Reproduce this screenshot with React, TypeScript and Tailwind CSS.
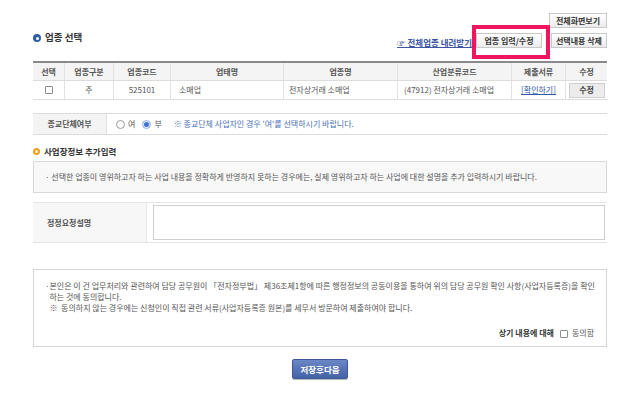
const font = "font-['Noto_Sans_CJK_KR','Noto_Sans',sans-serif]"

function Check() {
  return <span className="inline-block w-[8px] h-[8px] border border-[#8d8d8d] rounded-[1px] bg-white align-middle" />
}

function Radio({ checked }: { checked?: boolean }) {
  return (
    <span
      className={`inline-flex items-center justify-center w-[9px] h-[9px] rounded-full border ${
        checked ? 'border-[#8fb0e6] bg-[#e7effc]' : 'border-[#9a9a9a] bg-white'
      }`}
    >
      {checked && <span className="w-[5px] h-[5px] rounded-full bg-[#3f73d6]" />}
    </span>
  )
}

function GrayButton({ children, className = '' }: { children: React.ReactNode; className?: string }) {
  return (
    <button
      className={`h-[15px] border border-[#c9c9c9] bg-gradient-to-b from-white to-[#ececec] text-[8px] font-bold text-[#333] leading-none whitespace-nowrap ${className}`}
    >
      {children}
    </button>
  )
}

const cols = 'grid grid-cols-[31px_49px_57px_113px_114px_114px_54px_42px]'
const headers = ['선택', '업종구분', '업종코드', '업태명', '업종명', '산업분류코드', '제출서류', '수정']

export default function App() {
  return (
    <div className={`w-[641px] h-[405px] bg-white pt-[13px] pl-[33px] ${font}`}>
      <div className="w-[574px]">
        {/* top right */}
        <div className="flex justify-end h-[15px]">
          <GrayButton className="w-[58px]">전체화면보기</GrayButton>
        </div>

        {/* title row */}
        <div className="relative flex items-start mt-[5px] h-[15px]">
          <div className="flex items-center gap-[4px] h-[10px]">
            <span className="flex items-center justify-center w-[8px] h-[8px] rounded-full bg-[#2f5ea8]">
              <span className="w-[3px] h-[3px] rounded-full bg-white" />
            </span>
            <span className="text-[9.5px] font-bold text-[#333] leading-none">업종 선택</span>
          </div>
          <div className="ml-auto flex items-center h-[15px]">
            <span className="mt-[4px] text-[8.5px] font-bold text-[#3b55a3] underline leading-none whitespace-nowrap">
              ☞ 전체업종 내려받기
            </span>
            <GrayButton className="ml-[4px] w-[66px]">업종 입력/수정</GrayButton>
            <GrayButton className="ml-[9px] w-[56px]">선택내용 삭제</GrayButton>
          </div>
          {/* highlight box */}
          <div className="absolute left-[439px] top-[-8px] w-[78px] h-[34px] border-[4px] border-[#f0155f]" />
        </div>

        {/* table */}
        <div className="mt-[13px] border-t-2 border-[#8a8a8a] text-[8px]">
          <div className={`${cols} h-[18px] bg-[#f4f4f4] border-b border-[#dcdcdc]`}>
            {headers.map((h, i) => (
              <div
                key={h}
                className={`flex items-center justify-center font-bold text-[#555] ${i > 0 ? 'border-l border-[#e2e2e2]' : ''}`}
              >
                {h}
              </div>
            ))}
          </div>
          <div className={`${cols} h-[19px] border-b border-[#dcdcdc] text-[#555]`}>
            <div className="flex items-center justify-center"><Check /></div>
            <div className="flex items-center justify-center border-l border-[#e2e2e2]">주</div>
            <div className="flex items-center justify-center border-l border-[#e2e2e2]">525101</div>
            <div className="flex items-center pl-[8px] border-l border-[#e2e2e2]">소매업</div>
            <div className="flex items-center pl-[5px] border-l border-[#e2e2e2]">전자상거래 소매업</div>
            <div className="flex items-center pl-[6px] border-l border-[#e2e2e2] whitespace-nowrap">(47912) 전자상거래 소매업</div>
            <div className="flex items-center justify-center border-l border-[#e2e2e2] text-[#3355aa] underline">[확인하기]</div>
            <div className="flex items-center justify-center border-l border-[#e2e2e2]">
              <button className="w-[36px] h-[15px] border border-[#d0d0d0] bg-[#ececec] text-[8px] font-bold text-[#444]">수정</button>
            </div>
          </div>
        </div>

        {/* religious group */}
        <div className="mt-[13px] flex h-[22px] border-y border-[#dcdcdc] text-[8px]">
          <div className="w-[74px] flex items-center justify-center bg-[#f4f4f4] border-r border-[#e2e2e2] font-bold text-[#555]">
            종교단체여부
          </div>
          <div className="flex items-center pl-[9px] text-[#555]">
            <Radio />
            <span className="ml-[3px]">여</span>
            <span className="ml-[7px]"><Radio checked /></span>
            <span className="ml-[3px]">부</span>
            <span className="ml-[12px] text-[#4a6fb8]">※ 종교단체 사업자인 경우 '여'를 선택하시기 바랍니다.</span>
          </div>
        </div>

        {/* additional info */}
        <div className="mt-[11px] flex items-center gap-[4px] h-[10px]">
          <span className="flex items-center justify-center w-[7px] h-[7px] rounded-full bg-[#f0a020]">
            <span className="w-[3px] h-[3px] rounded-full bg-[#fff2d0]" />
          </span>
          <span className="text-[8.5px] font-bold text-[#333] leading-none">사업장정보 추가입력</span>
        </div>
        <div className="mt-[5px] h-[32px] flex items-center pl-[11px] bg-[#f8f8f8] border border-[#d8d8d8] text-[8px] text-[#555] whitespace-nowrap">
          · 선택한 업종이 영위하고자 하는 사업 내용을 정확하게 반영하지 못하는 경우에는, 실제 영위하고자 하는 사업에 대한 설명을 추가 입력하시기 바랍니다.
        </div>

        {/* correction request */}
        <div className="mt-[9px] flex h-[41px] border-y border-[#e4e4e4] text-[8px]">
          <div className="w-[114px] flex items-center pl-[14px] bg-[#f7f7f7] border-r border-[#e8e8e8] font-bold text-[#555]">
            정정요청설명
          </div>
          <div className="flex-1 flex items-center pl-[6px] pr-[2px]">
            <div className="w-full h-[35px] border border-[#cfcfcf] bg-white" />
          </div>
        </div>

        {/* agreement */}
        <div className="mt-[26px] h-[78px] border border-[#d6d6d6] bg-white pt-[10px] pl-[11px] pr-[12px] text-[8px] text-[#555] leading-[11px]">
          <div className="flex whitespace-nowrap">
            <span className="w-[6px]">·</span>
            <div>
              <div>본인은 이 건 업무처리와 관련하여 담당 공무원이 「전자정부법」 제36조제1항에 따른 행정정보의 공동이용을 통하여 위의 담당 공무원 확인 사항(사업자등록증)을 확인</div>
              <div>하는 것에 동의합니다.</div>
              <div>※&nbsp;&nbsp;동의하지 않는 경우에는 신청인이 직접 관련 서류(사업자등록증 원본)를 세무서 방문하여 제출하여야 합니다.</div>
            </div>
          </div>
          <div className="mt-[14px] flex items-center justify-end gap-[4px]">
            <span className="font-bold text-[#333]">상기 내용에 대해</span>
            <span className="ml-[2px]"><Check /></span>
            <span>동의함</span>
          </div>
        </div>

        {/* save */}
        <div className="mt-[12px] flex justify-center">
          <button className="w-[56px] h-[20px] rounded-[2px] border border-[#3d5a98] bg-gradient-to-b from-[#6a87c6] to-[#4462a6] text-[8.5px] font-bold text-white shadow-[0_1px_1px_rgba(0,0,0,0.3)]">
            저장후다음
          </button>
        </div>
      </div>
    </div>
  )
}
